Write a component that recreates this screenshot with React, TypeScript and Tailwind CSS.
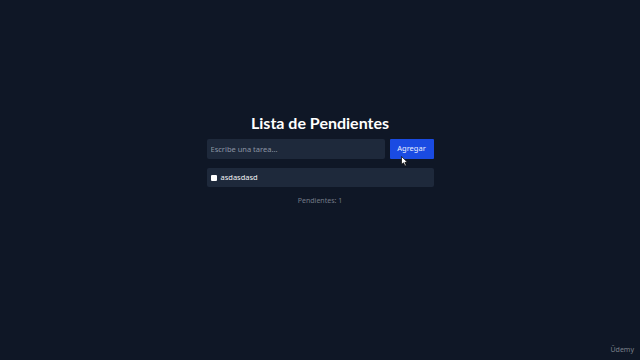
import React from 'react';

export default function App() {
  const [tasks] = React.useState([{ id: 1, text: 'asdasdasd', done: false }]);
  const pending = tasks.filter((t) => !t.done).length;

  return (
    <div
      className="relative w-[640px] h-[360px] bg-[#0f1726] text-white overflow-hidden"
      style={{ fontFamily: '"Noto Sans", "Open Sans", sans-serif' }}
    >
      <div className="flex flex-col items-center pt-[112px]">
        <h1
          className="text-[16px] leading-[22px] font-bold text-white"
          style={{ fontFamily: 'Lato, "Noto Sans", sans-serif' }}
        >
          Lista de Pendientes
        </h1>
        <div className="w-[227px] mt-[5px] flex flex-col">
          <div className="flex gap-[5px]">
            <input
              className="flex-1 h-[20px] rounded-[2px] bg-[#1e293b] px-[4px] text-[7.5px] text-gray-300 placeholder:text-[#8b94a3] outline-none"
              placeholder="Escribe una tarea..."
            />
            <button className="w-[44px] h-[20px] rounded-[1px] bg-[#1a4be2] text-[7.5px] text-[#e8edff]">
              Agregar
            </button>
          </div>
          <ul className="mt-[9px] flex flex-col gap-[4px]">
            {tasks.map((t) => (
              <li
                key={t.id}
                className="h-[19px] rounded-[2px] bg-[#1e293b] flex items-center px-[4px] gap-[4px]"
              >
                <span className="w-[6px] h-[6px] rounded-[1px] bg-white" />
                <span className="text-[7.5px] text-gray-100">{t.text}</span>
              </li>
            ))}
          </ul>
          <p className="mt-[9px] text-center text-[7px] text-[#737a86]">Pendientes: {pending}</p>
        </div>
      </div>

      {/* mouse cursor */}
      <svg className="absolute left-[401px] top-[156px]" width="8" height="11" viewBox="0 0 8 11">
        <path d="M0.5 0.5 L0.5 8.5 L2.5 6.8 L4 10 L5.3 9.4 L3.9 6.3 L6.5 6.3 Z" fill="white" stroke="black" strokeWidth="0.7" />
      </svg>

      <span className="absolute right-[6px] bottom-[5px] text-[7px] text-[#7a808a]">Ūdemy</span>
    </div>
  );
}
